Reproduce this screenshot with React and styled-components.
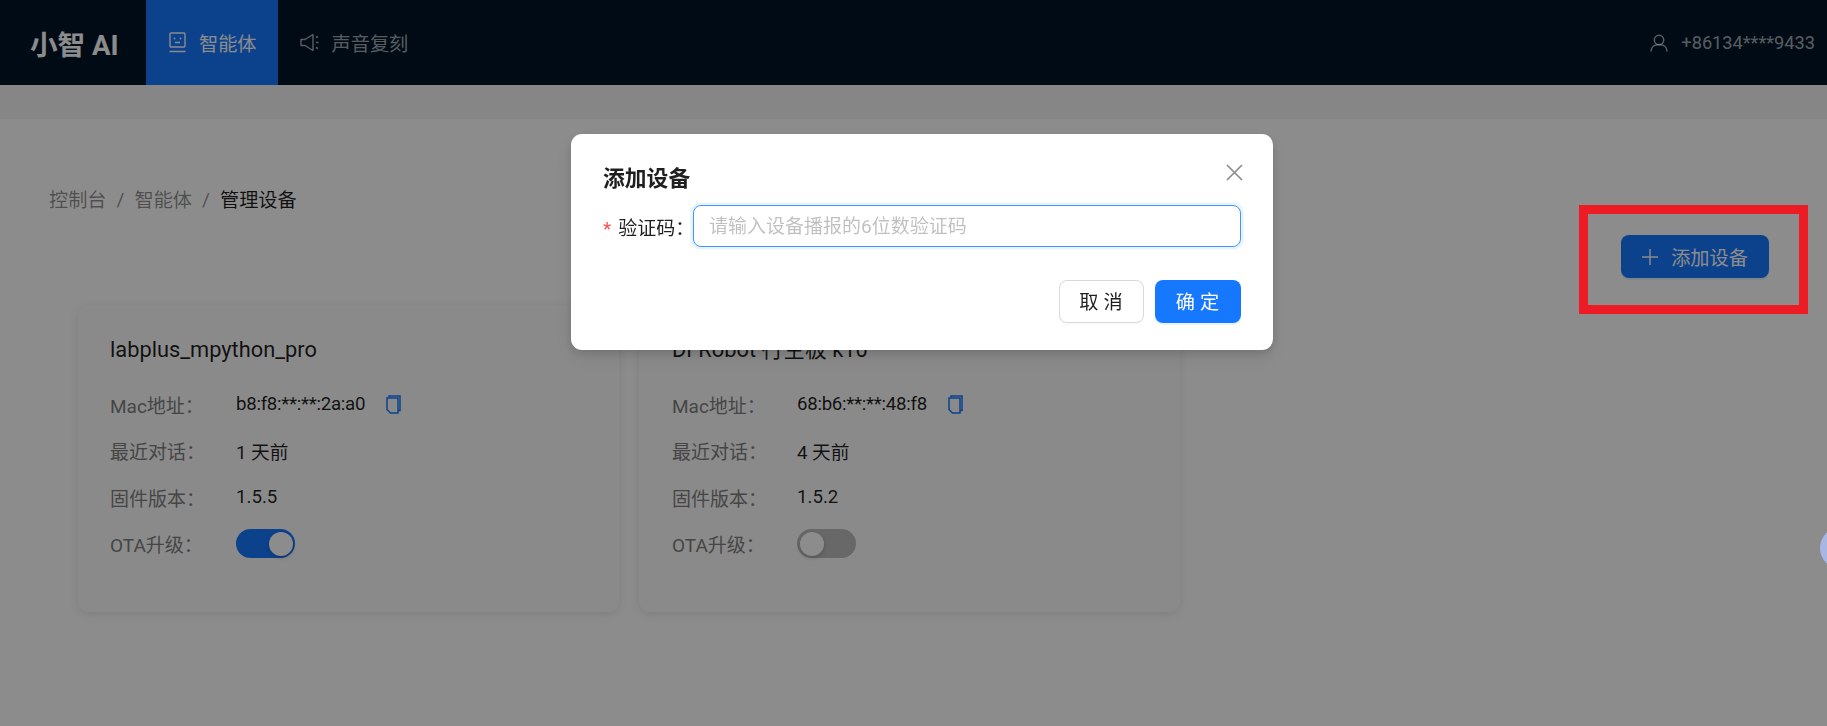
import React from "react";
import styled, { createGlobalStyle } from "styled-components";

const Global = createGlobalStyle`
  html, body { margin: 0; padding: 0; background: #fff; }
  body { font-family: Roboto, "Noto Sans CJK SC", sans-serif; font-size: 19.2px; overflow: hidden; }
  * { box-sizing: border-box; }
`;

const Page = styled.div`
  width: 1827px; height: 726px; display: flex; flex-direction: column; background: #fff; overflow: hidden;
`;
const Header = styled.header`
  height: 85px; flex: none; background: #001529; display: flex; align-items: stretch; color: rgba(255,255,255,.65);
`;
const Logo = styled.div`
  width: 146px; padding-left: 30px; display: flex; align-items: center; color: #fff; font-size: 27.6px; font-weight: 700; white-space: nowrap;
`;
const NavItem = styled.div`
  display: flex; align-items: center; gap: 12px; padding: 0 21px 0 22px;
  background: ${p => p.$active ? "#1677ff" : "transparent"};
  color: ${p => p.$active ? "#fff" : "rgba(255,255,255,.65)"};
  white-space: nowrap;
`;
const User = styled.div`
  margin-left: auto; padding-right: 12px; display: flex; align-items: center; gap: 13px; font-size: 18.2px;
`;
const Band = styled.div`height: 34px; flex: none; background: #f5f5f5;`;
const Content = styled.main`flex: 1; display: flex; flex-direction: column;`;
const Crumbs = styled.nav`
  margin: 67px 0 0 49px; height: 26px; display: flex; align-items: center; gap: 10px; color: rgba(0,0,0,.45);
`;
const Crumb = styled.span`color: ${p => p.$current ? "rgba(0,0,0,.88)" : "rgba(0,0,0,.45)"};`;
const Toolbar = styled.div`margin-top: 23px; display: flex; justify-content: flex-end; padding-right: 58px;`;
const Primary = styled.button`
  height: 43px; width: 148px; border: 0; border-radius: 8px; background: #1677ff; color: #fff;
  font: inherit; display: flex; align-items: center; justify-content: center; gap: 13px; padding: 0;
  box-shadow: 0 2px 0 rgba(5,145,255,.1);
`;
const Cards = styled.div`margin: 27px 0 0 78px; display: flex; gap: 20px;`;
const Card = styled.section`
  width: 541px; height: 307px; padding: 29px 0 0 ${p => p.$pad}px; background: #fcfcfc; border-radius: 11px;
  box-shadow: 0 2px 10px rgba(0,0,0,.1);
`;
const CardTitle = styled.div`font-size: 21.8px; height: 32px; line-height: 32px; color: rgba(0,0,0,.88); margin-bottom: 15px; white-space: nowrap;`;
const Row = styled.div`
  display: grid; grid-template-columns: ${p => p.$label}px auto 1fr; height: 46.5px; align-items: center; color: rgba(0,0,0,.88); font-size: 18.67px;
`;
const Label = styled.span`color: #7f7f7f; font-size: 19px; white-space: nowrap;`;
const Mac = styled.span`letter-spacing: -0.28px;`;
const CopyWrap = styled.span`margin-left: 21px; color: #1677ff; display: flex;`;
const Toggle = styled.span`
  width: 59px; height: 29px; border-radius: 15px; position: relative; display: block;
  background: ${p => p.$on ? "#1677ff" : "rgba(0,0,0,.25)"};
`;
const Knob = styled.span`
  position: absolute; top: 2.5px; width: 24px; height: 24px; border-radius: 50%; background: #fff;
  left: ${p => p.$on ? "32.5px" : "2.5px"}; box-shadow: 0 2px 4px rgba(0,35,11,.2);
`;
const Mask = styled.div`position: fixed; inset: 0; background: rgba(0,0,0,.45);`;
const Modal = styled.div`
  position: fixed; left: 571px; top: 134px; width: 702px; height: 216px; background: #fff; border-radius: 11px;
  padding: 27px 32px 27px; display: flex; flex-direction: column;
  box-shadow: 0 8px 21px rgba(0,0,0,.08), 0 4px 8px rgba(0,0,0,.12);
`;
const ModalTitle = styled.div`font-size: 21.8px; font-weight: 600; line-height: 36px; height: 36px; color: rgba(0,0,0,.88);`;
const Close = styled.span`position: absolute; top: 30px; right: 30px; color: rgba(0,0,0,.45); display: flex;`;
const Field = styled.div`display: flex; align-items: center; margin-top: 8px; height: 42px;`;
const FieldLabel = styled.label`width: 90px; flex: none; font-size: 19px; color: rgba(0,0,0,.88); white-space: nowrap;`;
const Star = styled.span`color: #ff4d4f; margin-right: 7px;`;
const Input = styled.input`
  flex: 1; height: 42px; border: 1.3px solid #4096ff; border-radius: 8px; padding: 1px 15px 0; font: inherit; font-size: 19px; outline: 0;
  box-shadow: 0 0 0 2.6px rgba(5,145,255,.1); background: #fff;
  &::placeholder { color: rgba(0,0,0,.25); opacity: 1; }
`;
const Footer = styled.div`margin-top: auto; display: flex; justify-content: flex-end; gap: 11px;`;
const Btn = styled.button`
  height: 43px; width: ${p => p.$primary ? "86px" : "85px"}; border-radius: 8px; font: inherit; letter-spacing: 5px; padding: 0 0 2px 4px;
  background: ${p => p.$primary ? "#1677ff" : "#fff"}; color: ${p => p.$primary ? "#fff" : "rgba(0,0,0,.88)"};
  border: ${p => p.$primary ? "0" : "1.3px solid #d9d9d9"};
  box-shadow: 0 2px 0 ${p => p.$primary ? "rgba(5,145,255,.1)" : "rgba(0,0,0,.02)"};
`;
const Annotation = styled.div`
  position: fixed; left: 1579px; top: 205px; width: 229px; height: 109px; border: 9px solid #ed1c24;
`;
const Float = styled.div`
  position: fixed; left: 1820px; top: 527px; width: 42px; height: 42px; border-radius: 50%; background: #a8b6e4;
`;

const Robot = () => (
  <svg width="19" height="21" viewBox="0 0 19 21" fill="none" stroke="currentColor" strokeWidth="1.4">
    <rect x="2" y="1" width="15" height="14" rx="1" />
    <path d="M1.5 19.5h16M7 10.5h5" />
    <circle cx="6.5" cy="6.5" r=".9" fill="currentColor" stroke="none" />
    <circle cx="12.5" cy="6.5" r=".9" fill="currentColor" stroke="none" />
  </svg>
);
const Sound = () => (
  <svg width="20" height="19" viewBox="0 0 20 19" fill="none" stroke="currentColor" strokeWidth="1.4">
    <path d="M1 6.5h4L13 1.5v16L5 12.5H1z" strokeLinejoin="round" />
    <path d="M16 4.5l2-1M16 9.5h2.5M16 14.5l2 1" />
  </svg>
);
const UserIcon = () => (
  <svg width="18" height="18" viewBox="0 0 18 18" fill="none" stroke="currentColor" strokeWidth="1.5">
    <circle cx="9" cy="6" r="4.7" />
    <path d="M1 17.5c0-4.5 3.5-7 8-7s8 2.5 8 7" />
  </svg>
);
const Plus = () => (
  <svg width="16" height="16" viewBox="0 0 16 16" stroke="currentColor" strokeWidth="1.4"><path d="M8 0v16M0 8h16" /></svg>
);
const Copy = () => (
  <svg width="15" height="19" viewBox="0 0 15 19" fill="none" stroke="currentColor" strokeWidth="1.5">
    <path d="M3 2.5V1h11v14.5h-2" />
    <path d="M1 3h11v15H4.5L1 14.5z" />
  </svg>
);
const X = () => (
  <svg width="17" height="17" viewBox="0 0 17 17" stroke="currentColor" strokeWidth="1.7"><path d="M1 1l15 15M16 1L1 16" /></svg>
);

const devices = [
  { name: "labplus_mpython_pro", mac: "b8:f8:**:**:2a:a0", last: "1 天前", fw: "1.5.5", on: true, label: 126, pad: 32 },
  { name: "DFRobot 行空板 k10", mac: "68:b6:**:**:48:f8", last: "4 天前", fw: "1.5.2", on: false, label: 125, pad: 33 },
];

export default function App() {
  return (
    <>
      <Global />
      <Page>
        <Header>
          <Logo>小智 AI</Logo>
          <NavItem $active><Robot />智能体</NavItem>
          <NavItem><Sound />声音复刻</NavItem>
          <User><UserIcon />+86134****9433</User>
        </Header>
        <Band />
        <Content>
          <Crumbs>
            <Crumb>控制台</Crumb><span>/</span><Crumb>智能体</Crumb><span>/</span><Crumb $current>管理设备</Crumb>
          </Crumbs>
          <Toolbar><Primary><Plus />添加设备</Primary></Toolbar>
          <Cards>
            {devices.map(d => (
              <Card key={d.name} $pad={d.pad}>
                <CardTitle>{d.name}</CardTitle>
                <Row $label={d.label}><Label>Mac地址：</Label><Mac>{d.mac}</Mac><CopyWrap><Copy /></CopyWrap></Row>
                <Row $label={d.label}><Label>最近对话：</Label><span>{d.last}</span></Row>
                <Row $label={d.label}><Label>固件版本：</Label><span>{d.fw}</span></Row>
                <Row $label={d.label}><Label>OTA升级：</Label><Toggle $on={d.on}><Knob $on={d.on} /></Toggle></Row>
              </Card>
            ))}
          </Cards>
        </Content>
      </Page>
      <Mask />
      <Float />
      <Modal>
        <ModalTitle>添加设备</ModalTitle>
        <Close><X /></Close>
        <Field>
          <FieldLabel><Star>*</Star>验证码：</FieldLabel>
          <Input placeholder="请输入设备播报的6位数验证码" />
        </Field>
        <Footer>
          <Btn>取消</Btn>
          <Btn $primary>确定</Btn>
        </Footer>
      </Modal>
      <Annotation />
    </>
  );
}
